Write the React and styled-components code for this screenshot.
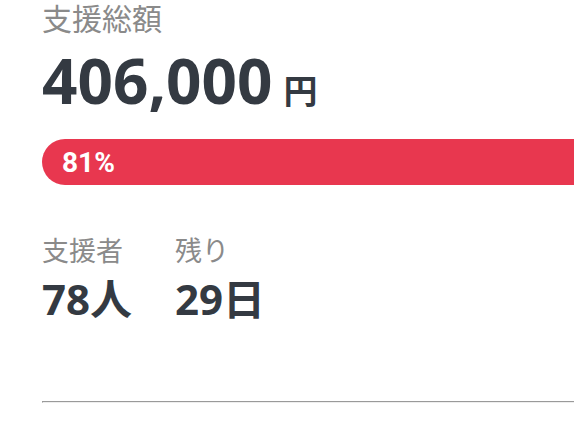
import React from 'react';
import styled, { createGlobalStyle } from 'styled-components';

const GlobalStyle = createGlobalStyle`
	html, body {
		margin: 0;
		padding: 0;
		background: #ffffff;
		overflow: hidden;
	}
	body {
		font-family: Roboto, "Noto Sans CJK JP", sans-serif;
		color: #343a42;
	}
`;

const Panel = styled.section`
	width: 640px;
	padding: 0 0 0 42px;
	box-sizing: border-box;
`;

const Label = styled.div`
	font-size: ${(props) => props.size || '27px'};
	line-height: 1.3;
	color: #8a8a8a;
	font-weight: 400;
`;

const Total = styled.div`
	display: flex;
	align-items: baseline;
	margin-top: 4px;
	font-weight: 700;
	line-height: 1.2;
`;

const Amount = styled.span`
	font-family: "Noto Sans", "Noto Sans CJK JP", sans-serif;
	font-size: 62px;
`;

const Unit = styled.span`
	font-size: 34px;
	margin-left: 11px;
`;

const Track = styled.div`
	margin-top: 22px;
	height: 46px;
	border-radius: 23px 0 0 23px;
	background: #e8374f;
	display: flex;
	align-items: center;
	padding-left: 20px;
`;

const Percent = styled.span`
	color: #ffffff;
	font-size: 28px;
	font-weight: 700;
`;

const Stats = styled.div`
	display: flex;
	gap: 43px;
	margin-top: 50px;
`;

const Stat = styled.div`
	display: flex;
	flex-direction: column;
`;

const Value = styled.div`
	font-family: "Noto Sans", "Noto Sans CJK JP", sans-serif;
	font-size: 42px;
	font-weight: 700;
	line-height: 1.2;
	margin-top: 4px;
`;

const Divider = styled.hr`
	margin: 76px 0 0;
`;

const stats = [
	{ label: '支援者', value: '78人' },
	{ label: '残り', value: '29日' },
];

function App() {
	return (
		<>
			<GlobalStyle />
			<Panel>
				<Label size={'30px'}>支援総額</Label>
				<Total>
					<Amount>406,000</Amount>
					<Unit>円</Unit>
				</Total>
				<Track>
					<Percent>81%</Percent>
				</Track>
				<Stats>
					{stats.map((s) => (
						<Stat key={s.label}>
							<Label>{s.label}</Label>
							<Value>{s.value}</Value>
						</Stat>
					))}
				</Stats>
				<Divider />
			</Panel>
		</>
	);
}

export default App;
